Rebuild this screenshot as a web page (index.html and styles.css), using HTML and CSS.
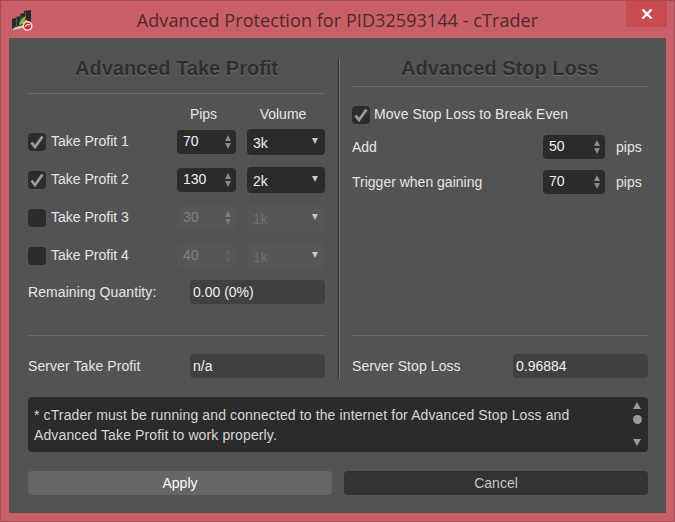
FILE: index.html
```html
<!DOCTYPE html>
<html>
<head>
<meta charset="utf-8">
<title>Advanced Protection</title>
<link rel="stylesheet" href="styles.css">
</head>
<body>
<div class="window">
  <header class="titlebar">
    <svg class="appicon" width="22" height="22" viewBox="0 0 22 22">
      <path d="M1 10 L5 9 L5 8 L9 7 L9 5 L13 4 L13 2 L20 1 L20 13 L17 18 L1 20Z" fill="#2b2b2b"/>
      <path d="M5.5 8.5 L5.5 17 M10 6 L10 15 M14.5 3 L14.5 13" stroke="#6b6260" stroke-width="0.8"/>
      <path d="M1 20.5 C5 17 10 16 15 16 L14 18.5 L3 21Z" fill="#d8c898"/>
      <path d="M8 16 C9 11 11 9 15 7 L13.5 11 L17 11 L12 15Z" fill="#8ab544"/>
      <circle cx="16.5" cy="17" r="5" fill="#f2dede"/>
      <circle cx="16.5" cy="17" r="3.4" fill="#d8222e"/>
      <path d="M14.5 17.8 C15 15.8 17 15.2 19 16" stroke="#fff" stroke-width="1.1" fill="none"/>
    </svg>
    <h1 class="title">Advanced Protection for PID32593144 - cTrader</h1>
    <button class="close" aria-label="Close">
      <svg width="12" height="10" viewBox="0 0 12 10"><path d="M1.5 0.5 L10.5 9.5 M10.5 0.5 L1.5 9.5" stroke="#fff" stroke-width="2.2"/></svg>
    </button>
  </header>
  <main class="client">
    <div class="panels">
      <section class="panel">
        <h2 class="heading">Advanced Take Profit</h2>
        <hr class="rule">
        <div class="tp-head">
          <span></span>
          <div class="col-head col-pips">Pips</div>
          <div class="col-head">Volume</div>
        </div>
        <div class="tp-grid">
          <label class="check-label"><span class="check"><svg width="16" height="16" viewBox="0 0 16 16"><path class="tick" d="M2.5 8.5 L6 13 L13.5 2.5"/></svg></span>Take Profit 1</label>
          <div class="spin"><span>70</span><span class="arrows"><i class="up"></i><i class="down"></i></span></div>
          <div class="select"><span>3k</span><i class="caret"></i></div>

          <label class="check-label"><span class="check"><svg width="16" height="16" viewBox="0 0 16 16"><path class="tick" d="M2.5 8.5 L6 13 L13.5 2.5"/></svg></span>Take Profit 2</label>
          <div class="spin"><span>130</span><span class="arrows"><i class="up"></i><i class="down"></i></span></div>
          <div class="select"><span>2k</span><i class="caret"></i></div>

          <label class="check-label"><span class="check"></span>Take Profit 3</label>
          <div class="spin disabled"><span>30</span><span class="arrows"><i class="up"></i><i class="down"></i></span></div>
          <div class="select disabled"><span>1k</span><i class="caret"></i></div>

          <label class="check-label"><span class="check"></span>Take Profit 4</label>
          <div class="spin disabled off"><span>40</span><span class="arrows"><i class="up"></i><i class="down"></i></span></div>
          <div class="select disabled"><span>1k</span><i class="caret"></i></div>
        </div>
        <div class="field-row remaining">
          <span class="label">Remaining Quantity:</span>
          <div class="readonly">0.00 (0%)</div>
        </div>
        <hr class="rule rule-bottom">
        <div class="field-row server">
          <span class="label">Server Take Profit</span>
          <div class="readonly">n/a</div>
        </div>
      </section>
      <div class="vline"></div>
      <section class="panel">
        <h2 class="heading">Advanced Stop Loss</h2>
        <hr class="rule rule-top-right">
        <label class="check-label move"><span class="check"><svg width="16" height="16" viewBox="0 0 16 16"><path class="tick" d="M2.5 8.5 L6 13 L13.5 2.5"/></svg></span>Move Stop Loss to Break Even</label>
        <div class="sl-row">
          <span class="label">Add</span>
          <div class="spin"><span>50</span><span class="arrows"><i class="up"></i><i class="down"></i></span></div>
          <span class="unit">pips</span>
        </div>
        <div class="sl-row">
          <span class="label">Trigger when gaining</span>
          <div class="spin"><span>70</span><span class="arrows"><i class="up"></i><i class="down"></i></span></div>
          <span class="unit">pips</span>
        </div>
        <hr class="rule rule-bottom-right">
        <div class="field-row server">
          <span class="label">Server Stop Loss</span>
          <div class="readonly">0.96884</div>
        </div>
      </section>
    </div>
    <div class="note">
      <p class="note-text">* cTrader must be running and connected to the internet for Advanced Stop Loss and Advanced Take Profit to work properly.</p>
      <div class="scroll"><i class="s-up"></i><i class="s-thumb"></i><i class="s-down"></i></div>
    </div>
    <div class="buttons">
      <button class="btn btn-apply">Apply</button>
      <button class="btn btn-cancel">Cancel</button>
    </div>
  </main>
</div>
</body>
</html>
```

FILE: styles.css
```css
* { box-sizing: border-box; }
html, body { margin: 0; height: 100%; }
body { font-family: "Liberation Sans", Arial, sans-serif; font-size: 14px; color: #e6e6e6; }

.window {
  width: 675px; height: 522px;
  background: #c95f67;
  border: 1px solid #a84d55;
  padding: 0 8px 8px;
  display: flex; flex-direction: column;
}
.titlebar {
  height: 37px; flex: none;
  display: grid; grid-template-columns: 1fr auto 1fr;
  margin: 0 -8px;
}
.appicon { margin: 8px 0 0 10px; }
.title {
  margin: 0;
  font: 400 18px/38px "Open Sans", sans-serif;
  letter-spacing: 0.07px;
  color: #4f2a2e;
  white-space: nowrap;
}
.close {
  justify-self: end;
  width: 41px; height: 26px;
  margin: 0 7px 0 0;
  border: 0; padding: 0;
  background: #c84b52;
  display: flex; align-items: center; justify-content: center;
}
.client {
  flex: 1;
  background: #535353;
  padding: 0 18px 18px 19px;
  display: flex; flex-direction: column;
}
.panels { display: grid; grid-template-columns: 297px 1fr 296px; height: 340px; }
.panel { display: flex; flex-direction: column; }
.vline { width: 2px; margin: 20px 0 0 13px; height: 320px; background: #2f2f2f; border-right: 1px solid #777777; }
.heading {
  margin: 18px 0 0; height: 24px;
  font-size: 20px; line-height: 24px; font-weight: 700;
  text-align: center; color: #2f2f2f;
  text-shadow: 0 1px 1px #6e6e6e;
}
.rule { margin: 13px 0 0; border: 0; height: 1px; background: #6b6b6b; flex: none; }
.rule-top-right { margin-top: 6px; }

.tp-head, .tp-grid {
  display: grid;
  grid-template-columns: 149px 70px 78px;
}
.tp-head { grid-template-rows: 16px; margin-top: 12px; margin-bottom: 8px; }
.tp-grid { grid-auto-rows: 24px; row-gap: 14px; align-items: center; }
.tp-grid .spin { width: 59px; }
.col-head { line-height: 16px; text-align: center; padding-right: 6px; color: #e6e6e6; }
.col-pips { padding-right: 17px; }

.check-label { display: flex; align-items: center; gap: 5px; padding-bottom: 2px; color: #e6e6e6; white-space: nowrap; }
.check {
  width: 18px; height: 18px; flex: none; margin-top: 2px;
  background: #2c2c2c; border-radius: 4px;
  display: flex; align-items: center; justify-content: center;
}
.tick { fill: none; stroke: #9c9c9c; stroke-width: 2.8; }
.spin {
  height: 24px; background: #2b2b2b; border-radius: 4px;
  display: flex; align-items: center; justify-content: space-between;
  padding: 0 5px 2px 6px; color: #f2f2f2; line-height: 20px;
}
.arrows { display: flex; flex-direction: column; gap: 2px; margin-top: 2px; }
.up, .down { display: block; width: 0; height: 0; border-left: 3.5px solid transparent; border-right: 3.5px solid transparent; }
.up { border-bottom: 6px solid #8b8b8b; }
.down { border-top: 6px solid #8b8b8b; }
.select {
  height: 26px; background: #2b2b2b; border-radius: 4px;
  display: flex; align-items: center; justify-content: space-between;
  padding: 1px 7px 0 6px; color: #f2f2f2;
}
.caret { width: 0; height: 0; border-left: 3.5px solid transparent; border-right: 3.5px solid transparent; border-top: 6px solid #c8c8c8; margin-bottom: 3px; }
.spin.disabled, .select.disabled { background: #565656; color: #808080; }
.select.disabled { color: #6f6f6f; }
.spin.disabled .up { border-bottom-color: #7b7b7b; }
.spin.disabled .down { border-top-color: #7b7b7b; }
.spin.off .up { border-bottom-color: #5f5f5f; }
.spin.off .down { border-top-color: #5f5f5f; }

.field-row { display: flex; align-items: center; justify-content: space-between; height: 24px; flex: none; }
.label { color: #e6e6e6; white-space: nowrap; }
.field-row .label { letter-spacing: 0.08px; }
.readonly {
  width: 135px; height: 24px; line-height: 24px; padding: 0 3px;
  background: #404040; border-radius: 4px; color: #f0f0f0;
}
.remaining { margin-top: 12px; }
.rule-bottom { margin-top: 31px; }
.server { margin-top: 18px; }

.move { margin-top: 18px; height: 20px; margin-bottom: -1px; gap: 4px; letter-spacing: 0.07px; }
.sl-row { display: grid; grid-template-columns: 191px 62px 1fr; align-items: center; height: 24px; margin-top: 11px; }
.unit { margin-left: 11px; color: #e6e6e6; }
.rule-bottom-right { margin-top: 141px; }

.note {
  height: 55px; margin-top: 19px; flex: none;
  background: #2b2b2b; border-radius: 4px;
  display: flex; justify-content: space-between;
  padding: 8px 4px 5px 6px;
}
.note-text { margin: 0; width: 578px; line-height: 20px; letter-spacing: 0.12px; color: #d8d8d8; }
.scroll { width: 14px; display: flex; flex-direction: column; align-items: center; }
.s-up { border-left: 4.5px solid transparent; border-right: 4.5px solid transparent; border-bottom: 7px solid #9a9a9a; margin-top: -3px; }
.s-thumb { width: 9px; height: 9px; border-radius: 50%; background: #9a9a9a; margin-top: 6px; }
.s-down { border-left: 4.5px solid transparent; border-right: 4.5px solid transparent; border-top: 7px solid #9a9a9a; margin-top: 15px; }

.buttons { display: grid; grid-template-columns: 304px 304px; justify-content: space-between; margin-top: 19px; }
.btn { height: 24px; border: 0; border-radius: 4px; font: 14px "Liberation Sans", Arial, sans-serif; padding: 0; }
.btn-apply { background: #666666; color: #ffffff; }
.btn-cancel { background: #333333; color: #c4c4c4; }
```
